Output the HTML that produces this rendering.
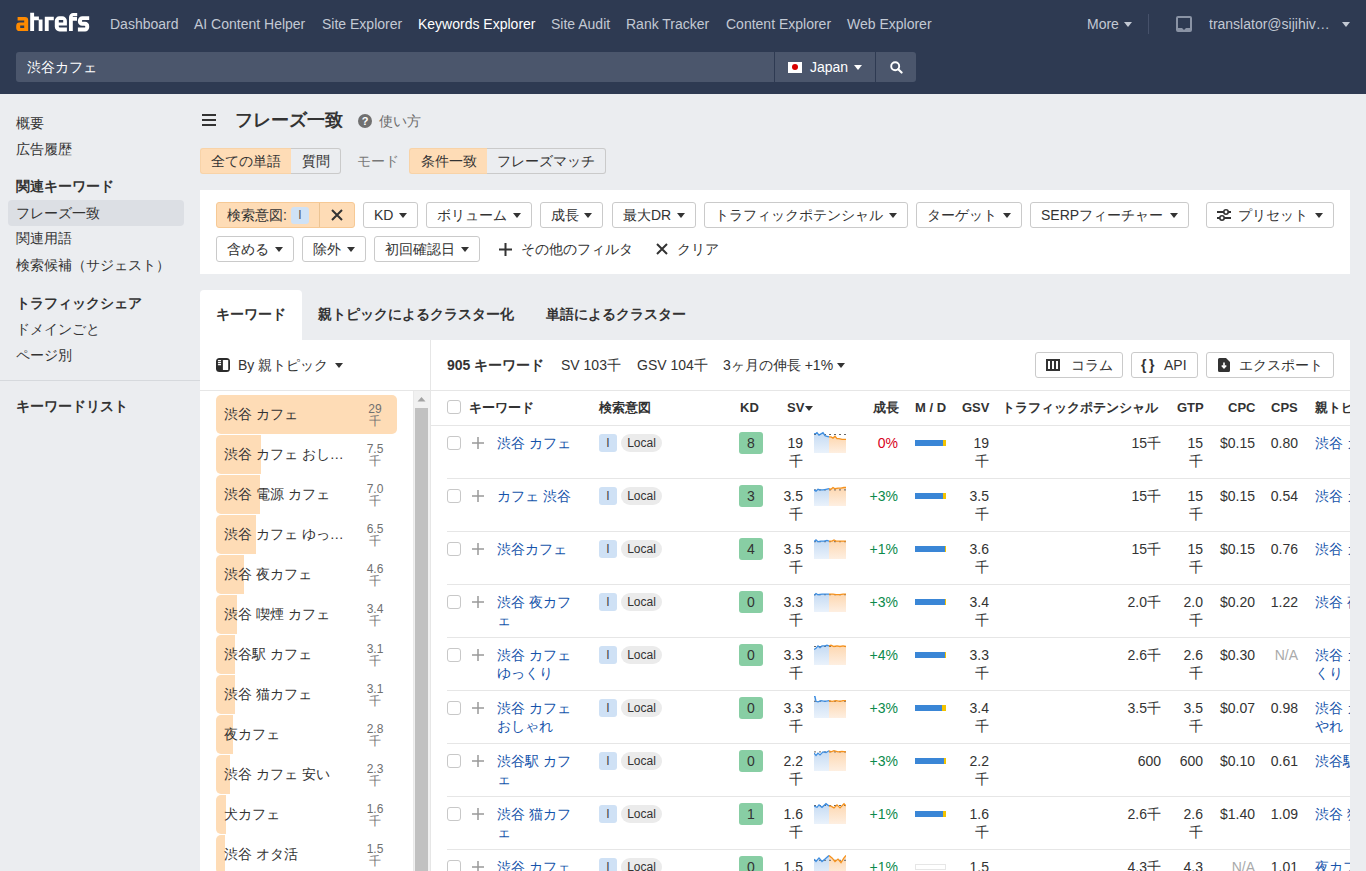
<!DOCTYPE html><html><head><meta charset="utf-8"><style>
*{box-sizing:border-box;margin:0;padding:0}
html,body{width:1366px;height:871px;overflow:hidden}
body{font-family:"Liberation Sans",sans-serif;font-size:14px;color:#333;background:#ebedf0;position:relative}
.abs{position:absolute;white-space:nowrap}
#hdr{position:absolute;left:0;top:0;width:1366px;height:94px;background:#2e3a52}
.nav{position:absolute;top:16px;line-height:16px;color:#c3c9d4;font-size:14px}
.sb{position:absolute;left:16px;line-height:26px;height:26px;font-size:14px;color:#333}
.btn{position:absolute;height:26px;background:#fff;border:1px solid #cacaca;border-radius:3px;line-height:24px;padding-left:10px;font-size:14px;color:#333;white-space:nowrap}
.btn span svg{display:block}
.th{position:absolute;top:390px;line-height:35px;font-weight:bold;font-size:13px;color:#333;white-space:nowrap}
.cell{position:absolute;line-height:18px;font-size:14px;white-space:nowrap}
.r{text-align:right}
</style></head><body>
<div id="hdr">
<svg class="abs" style="left:0;top:0" width="95" height="40" viewBox="0 0 95 40"><path fill="#ff8a00" fill-rule="evenodd" d="M17.6 17H25A3.2 3.2 0 0 1 28.2 20.2V31.1H19.6A3.4 3.4 0 0 1 16.2 27.7V26A3.4 3.4 0 0 1 19.6 22.6H24.2V20.4H17.6ZM20.2 25.6H24.2V28.1H20.2Z"/><path fill="#fff" d="M30.2 12.8H34.1V16.6H38.9V19.6H42.5V31.1H38.7V20.2H34.1V31.1H30.2Z"/><path fill="#fff" d="M44.8 16.7H53.8V20.2H48.7V31.1H44.8Z"/><path fill="#fff" fill-rule="evenodd" d="M59.5 16.3H62.2A4.7 4.7 0 0 1 66.9 21V25.5H58.8V26.6A1 1 0 0 0 59.8 27.6H66.9V31.4H59.5A4.7 4.7 0 0 1 54.8 26.7V21A4.7 4.7 0 0 1 59.5 16.3ZM58.8 20.1H63.2V22.4H58.8Z"/><path fill="#fff" d="M69 31V17.2A4.3 4.3 0 0 1 73.3 12.9H77.2V16.1H72.8V16.7H77V20.7H72.8V31Z"/><path fill="#fff" d="M82.4 16.3H89.2V20H82.8A0.9 0.9 0 0 0 82.8 21.8H85A4.2 4.2 0 0 1 89.2 26V27.2A4.2 4.2 0 0 1 85 31.4H77.9V27.6H84.4A0.9 0.9 0 0 0 84.4 25.8H82.2A4.3 4.3 0 0 1 77.9 21.5V20.8A4.5 4.5 0 0 1 82.4 16.3Z"/></svg>
<div class="nav" style="left:110px;color:#c3c9d4">Dashboard</div>
<div class="nav" style="left:194px;color:#c3c9d4">AI Content Helper</div>
<div class="nav" style="left:322px;color:#c3c9d4">Site Explorer</div>
<div class="nav" style="left:418px;color:#fff">Keywords Explorer</div>
<div class="nav" style="left:551px;color:#c3c9d4">Site Audit</div>
<div class="nav" style="left:626px;color:#c3c9d4">Rank Tracker</div>
<div class="nav" style="left:726px;color:#c3c9d4">Content Explorer</div>
<div class="nav" style="left:847px;color:#c3c9d4">Web Explorer</div>
<div class="nav" style="left:1087px">More</div>
<div class="abs" style="left:1124px;top:22px;color:#c3c9d4"><svg width="8" height="5" viewBox="0 0 8 5" style="display:block"><path d="M0 0H8L4 5Z" fill="currentColor"/></svg></div>
<div class="abs" style="left:1148px;top:14px;width:1px;height:20px;background:#46516a"></div>
<svg class="abs" style="left:1176px;top:16px" width="16" height="16" viewBox="0 0 16 16"><path d="M2 0H14A2 2 0 0 1 16 2V14A2 2 0 0 1 14 16H2A2 2 0 0 1 0 14V2A2 2 0 0 1 2 0ZM2 2V12H6L8 14L10 12H14V2Z" fill="#8a93a5"/></svg>
<div class="nav" style="left:1209px">translator@sijihiv…</div>
<div class="abs" style="left:1342px;top:22px;color:#c3c9d4"><svg width="8" height="5" viewBox="0 0 8 5" style="display:block"><path d="M0 0H8L4 5Z" fill="currentColor"/></svg></div>
<div class="abs" style="left:16px;top:52px;width:758px;height:30px;background:#4b566c;border-radius:3px 0 0 3px"></div>
<div class="abs" style="left:27px;top:58px;line-height:18px;color:#fff;font-size:14px">渋谷カフェ</div>
<div class="abs" style="left:775px;top:52px;width:100px;height:30px;background:#4b566c"></div>
<div class="abs" style="left:788px;top:62px;width:14px;height:11px;background:#fff"><div style="position:absolute;left:4px;top:2px;width:6px;height:6px;border-radius:50%;background:#d80000"></div></div>
<div class="abs" style="left:810px;top:59px;line-height:16px;color:#fff;font-size:14px">Japan</div>
<div class="abs" style="left:854px;top:65px;color:#fff"><svg width="8" height="5" viewBox="0 0 8 5" style="display:block"><path d="M0 0H8L4 5Z" fill="currentColor"/></svg></div>
<div class="abs" style="left:876px;top:52px;width:40px;height:30px;background:#4b566c;border-radius:0 3px 3px 0"></div>
<svg class="abs" style="left:890px;top:61px" width="13" height="13" viewBox="0 0 13 13"><circle cx="5.2" cy="5.2" r="4" stroke="#fff" stroke-width="1.9" fill="none"/><path d="M8.2 8.2L11.6 11.6" stroke="#fff" stroke-width="2.1" stroke-linecap="round"/></svg>
</div>
<div class="abs" style="left:8px;top:200px;width:176px;height:26px;background:#dcdfe4;border-radius:4px"></div>
<div class="sb" style="top:109.7px;">概要</div>
<div class="sb" style="top:136.0px;">広告履歴</div>
<div class="sb" style="top:173.0px;font-weight:bold;">関連キーワード</div>
<div class="sb" style="top:199.7px;">フレーズ一致</div>
<div class="sb" style="top:225.3px;">関連用語</div>
<div class="sb" style="top:251.7px;">検索候補（サジェスト）</div>
<div class="sb" style="top:289.7px;font-weight:bold;">トラフィックシェア</div>
<div class="sb" style="top:315.5px;">ドメインごと</div>
<div class="sb" style="top:342.0px;">ページ別</div>
<div class="abs" style="left:0;top:380px;width:200px;height:1px;background:#d6d9dd"></div>
<div class="sb" style="top:392.5px;font-weight:bold;font-size:14px">キーワードリスト</div>
<svg class="abs" style="left:202px;top:114px" width="14" height="12" viewBox="0 0 14 12"><rect x="0" y="0" width="14" height="2" fill="#333"/><rect x="0" y="5" width="14" height="2" fill="#333"/><rect x="0" y="10" width="14" height="2" fill="#333"/></svg>
<div class="abs" style="left:235px;top:109px;line-height:22px;font-size:18px;font-weight:bold;color:#333">フレーズ一致</div>
<svg class="abs" style="left:358px;top:114px" width="14" height="14" viewBox="0 0 14 14"><circle cx="7" cy="7" r="7" fill="#707070"/><text x="7" y="11.3" text-anchor="middle" font-family="Liberation Sans" font-weight="bold" font-size="11" fill="#fff">?</text></svg>
<div class="abs" style="left:379px;top:108px;line-height:26px;color:#6b6b6b">使い方</div>
<div class="abs" style="left:200px;top:148px;width:91px;height:26px;background:#fedcb6;border:1px solid #f8d3a8;border-right:none;border-radius:3px 0 0 3px;text-align:center;line-height:24px;font-size:14px;color:#333">全ての単語</div>
<div class="abs" style="left:291px;top:148px;width:50px;height:26px;background:#ebedf0;border:1px solid #cacaca;border-left:none;border-radius:0 3px 3px 0;text-align:center;line-height:24px;font-size:14px;color:#333">質問</div>
<div class="abs" style="left:357px;top:148px;line-height:26px;color:#777">モード</div>
<div class="abs" style="left:409px;top:148px;width:78px;height:26px;background:#fedcb6;border:1px solid #f8d3a8;border-right:none;border-radius:3px 0 0 3px;text-align:center;line-height:24px;font-size:14px;color:#333">条件一致</div>
<div class="abs" style="left:487px;top:148px;width:119px;height:26px;background:#ebedf0;border:1px solid #cacaca;border-left:none;border-radius:0 3px 3px 0;text-align:center;line-height:24px;font-size:14px;color:#333">フレーズマッチ</div>
<div class="abs" style="left:200px;top:190px;width:1150px;height:84px;background:#fff"></div>
<div class="abs" style="left:216px;top:202px;width:139px;height:26px;background:#fedcb6;border:1px solid #f6c995;border-radius:3px"></div>
<div class="abs" style="left:319px;top:203px;width:1px;height:24px;background:#ecc493"></div>
<div class="abs" style="left:227px;top:202px;line-height:26px;color:#333">検索意図:</div>
<div class="abs" style="left:291px;top:207px;width:18px;height:17px;background:#cfe2f6;border-radius:3px;text-align:center;line-height:17px;font-size:12px;color:#555">I</div>
<svg class="abs" style="left:331px;top:209px" width="12" height="12" viewBox="0 0 12 12"><path d="M1 1L11 11M11 1L1 11" stroke="#333" stroke-width="2"/></svg>
<div class="btn" style="left:363px;top:202px;width:55px">KD<span style="position:absolute;right:10px;top:10px"><svg width="8" height="5" viewBox="0 0 8 5" style="display:block"><path d="M0 0H8L4 5Z" fill="currentColor"/></svg></span></div>
<div class="btn" style="left:426px;top:202px;width:106px">ボリューム<span style="position:absolute;right:10px;top:10px"><svg width="8" height="5" viewBox="0 0 8 5" style="display:block"><path d="M0 0H8L4 5Z" fill="currentColor"/></svg></span></div>
<div class="btn" style="left:540px;top:202px;width:63px">成長<span style="position:absolute;right:10px;top:10px"><svg width="8" height="5" viewBox="0 0 8 5" style="display:block"><path d="M0 0H8L4 5Z" fill="currentColor"/></svg></span></div>
<div class="btn" style="left:612px;top:202px;width:84px">最大DR<span style="position:absolute;right:10px;top:10px"><svg width="8" height="5" viewBox="0 0 8 5" style="display:block"><path d="M0 0H8L4 5Z" fill="currentColor"/></svg></span></div>
<div class="btn" style="left:704px;top:202px;width:204px">トラフィックポテンシャル<span style="position:absolute;right:10px;top:10px"><svg width="8" height="5" viewBox="0 0 8 5" style="display:block"><path d="M0 0H8L4 5Z" fill="currentColor"/></svg></span></div>
<div class="btn" style="left:916px;top:202px;width:106px">ターゲット<span style="position:absolute;right:10px;top:10px"><svg width="8" height="5" viewBox="0 0 8 5" style="display:block"><path d="M0 0H8L4 5Z" fill="currentColor"/></svg></span></div>
<div class="btn" style="left:1030px;top:202px;width:159px">SERPフィーチャー<span style="position:absolute;right:10px;top:10px"><svg width="8" height="5" viewBox="0 0 8 5" style="display:block"><path d="M0 0H8L4 5Z" fill="currentColor"/></svg></span></div>
<div class="btn" style="left:1206px;top:202px;width:128px"><span style="display:inline-block;width:21px"></span>プリセット<span style="position:absolute;right:10px;top:10px"><svg width="8" height="5" viewBox="0 0 8 5" style="display:block"><path d="M0 0H8L4 5Z" fill="currentColor"/></svg></span></div>
<svg class="abs" style="left:1217px;top:209px" width="14" height="12" viewBox="0 0 14 12"><path d="M0 3H14M0 9H14" stroke="#333" stroke-width="2"/><circle cx="9" cy="3" r="2.2" fill="#fff" stroke="#333" stroke-width="1.6"/><circle cx="5" cy="9" r="2.2" fill="#fff" stroke="#333" stroke-width="1.6"/></svg>
<div class="btn" style="left:216px;top:236px;width:78px">含める<span style="position:absolute;right:10px;top:10px"><svg width="8" height="5" viewBox="0 0 8 5" style="display:block"><path d="M0 0H8L4 5Z" fill="currentColor"/></svg></span></div>
<div class="btn" style="left:302px;top:236px;width:64px">除外<span style="position:absolute;right:10px;top:10px"><svg width="8" height="5" viewBox="0 0 8 5" style="display:block"><path d="M0 0H8L4 5Z" fill="currentColor"/></svg></span></div>
<div class="btn" style="left:374px;top:236px;width:106px">初回確認日<span style="position:absolute;right:10px;top:10px"><svg width="8" height="5" viewBox="0 0 8 5" style="display:block"><path d="M0 0H8L4 5Z" fill="currentColor"/></svg></span></div>
<svg class="abs" style="left:499px;top:243px" width="13" height="13" viewBox="0 0 13 13"><path d="M6.5 0V13M0 6.5H13" stroke="#333" stroke-width="2"/></svg>
<div class="abs" style="left:521px;top:236px;line-height:26px;color:#333">その他のフィルタ</div>
<svg class="abs" style="left:656px;top:243px" width="12" height="12" viewBox="0 0 12 12"><path d="M1 1L11 11M11 1L1 11" stroke="#333" stroke-width="2"/></svg>
<div class="abs" style="left:677px;top:236px;line-height:26px;color:#333">クリア</div>
<div class="abs" style="left:200px;top:290px;width:102px;height:51px;background:#fff;border-radius:4px 4px 0 0"></div>
<div class="abs" style="left:216px;top:301px;line-height:26px;font-weight:bold;color:#333">キーワード</div>
<div class="abs" style="left:318px;top:301px;line-height:26px;font-weight:bold;color:#333">親トピックによるクラスター化</div>
<div class="abs" style="left:546px;top:301px;line-height:26px;font-weight:bold;color:#333">単語によるクラスター</div>
<div class="abs" style="left:200px;top:340px;width:1150px;height:531px;background:#fff"></div>
<div class="abs" style="left:430px;top:340px;width:1px;height:531px;background:#e6e6e6"></div>
<div class="abs" style="left:200px;top:390px;width:1150px;height:1px;background:#e6e6e6"></div>
<svg class="abs" style="left:216px;top:358px" width="14" height="14" viewBox="0 0 14 14"><rect x="0" y="0" width="14" height="14" rx="3.5" fill="#2b2b2b"/><rect x="6.9" y="1.9" width="5.3" height="10.1" rx="0.6" fill="#fff"/><rect x="1.9" y="2.1" width="3.2" height="1.1" rx="0.5" fill="#fff"/><rect x="1.9" y="4.1" width="3.2" height="1.1" rx="0.5" fill="#fff"/><rect x="1.9" y="6.1" width="3.2" height="1.1" rx="0.5" fill="#fff"/></svg>
<div class="abs" style="left:238px;top:352px;line-height:26px;color:#333">By 親トピック</div>
<div class="abs" style="left:335px;top:363px;color:#333;line-height:5px"><svg width="8" height="5" viewBox="0 0 8 5" style="display:block"><path d="M0 0H8L4 5Z" fill="currentColor"/></svg></div>
<div class="abs" style="left:216px;top:395px;width:181px;height:39px;background:#fedcb6;border-radius:5px"></div>
<div class="abs" style="left:224px;top:395px;line-height:39px;color:#333">渋谷 カフェ</div>
<div class="abs" style="left:366px;top:403px;line-height:12px;font-size:12px;color:#707070;text-align:center;width:18px">29<br>千</div>
<div class="abs" style="left:216px;top:435px;width:45px;height:39px;background:#fedcb6;border-radius:5px 0 0 5px"></div>
<div class="abs" style="left:224px;top:435px;line-height:39px;color:#333">渋谷 カフェ おし…</div>
<div class="abs" style="left:366px;top:443px;line-height:12px;font-size:12px;color:#707070;text-align:center;width:18px">7.5<br>千</div>
<div class="abs" style="left:216px;top:475px;width:44px;height:39px;background:#fedcb6;border-radius:5px 0 0 5px"></div>
<div class="abs" style="left:224px;top:475px;line-height:39px;color:#333">渋谷 電源 カフェ</div>
<div class="abs" style="left:366px;top:483px;line-height:12px;font-size:12px;color:#707070;text-align:center;width:18px">7.0<br>千</div>
<div class="abs" style="left:216px;top:515px;width:40px;height:39px;background:#fedcb6;border-radius:5px 0 0 5px"></div>
<div class="abs" style="left:224px;top:515px;line-height:39px;color:#333">渋谷 カフェ ゆっ…</div>
<div class="abs" style="left:366px;top:523px;line-height:12px;font-size:12px;color:#707070;text-align:center;width:18px">6.5<br>千</div>
<div class="abs" style="left:216px;top:555px;width:28px;height:39px;background:#fedcb6;border-radius:5px 0 0 5px"></div>
<div class="abs" style="left:224px;top:555px;line-height:39px;color:#333">渋谷 夜カフェ</div>
<div class="abs" style="left:366px;top:563px;line-height:12px;font-size:12px;color:#707070;text-align:center;width:18px">4.6<br>千</div>
<div class="abs" style="left:216px;top:595px;width:21px;height:39px;background:#fedcb6;border-radius:5px 0 0 5px"></div>
<div class="abs" style="left:224px;top:595px;line-height:39px;color:#333">渋谷 喫煙 カフェ</div>
<div class="abs" style="left:366px;top:603px;line-height:12px;font-size:12px;color:#707070;text-align:center;width:18px">3.4<br>千</div>
<div class="abs" style="left:216px;top:635px;width:19px;height:39px;background:#fedcb6;border-radius:5px 0 0 5px"></div>
<div class="abs" style="left:224px;top:635px;line-height:39px;color:#333">渋谷駅 カフェ</div>
<div class="abs" style="left:366px;top:643px;line-height:12px;font-size:12px;color:#707070;text-align:center;width:18px">3.1<br>千</div>
<div class="abs" style="left:216px;top:675px;width:19px;height:39px;background:#fedcb6;border-radius:5px 0 0 5px"></div>
<div class="abs" style="left:224px;top:675px;line-height:39px;color:#333">渋谷 猫カフェ</div>
<div class="abs" style="left:366px;top:683px;line-height:12px;font-size:12px;color:#707070;text-align:center;width:18px">3.1<br>千</div>
<div class="abs" style="left:216px;top:715px;width:17px;height:39px;background:#fedcb6;border-radius:5px 0 0 5px"></div>
<div class="abs" style="left:224px;top:715px;line-height:39px;color:#333">夜カフェ</div>
<div class="abs" style="left:366px;top:723px;line-height:12px;font-size:12px;color:#707070;text-align:center;width:18px">2.8<br>千</div>
<div class="abs" style="left:216px;top:755px;width:14px;height:39px;background:#fedcb6;border-radius:5px 0 0 5px"></div>
<div class="abs" style="left:224px;top:755px;line-height:39px;color:#333">渋谷 カフェ 安い</div>
<div class="abs" style="left:366px;top:763px;line-height:12px;font-size:12px;color:#707070;text-align:center;width:18px">2.3<br>千</div>
<div class="abs" style="left:216px;top:795px;width:10px;height:39px;background:#fedcb6;border-radius:5px 0 0 5px"></div>
<div class="abs" style="left:224px;top:795px;line-height:39px;color:#333">犬カフェ</div>
<div class="abs" style="left:366px;top:803px;line-height:12px;font-size:12px;color:#707070;text-align:center;width:18px">1.6<br>千</div>
<div class="abs" style="left:216px;top:835px;width:9px;height:39px;background:#fedcb6;border-radius:5px 0 0 5px"></div>
<div class="abs" style="left:224px;top:835px;line-height:39px;color:#333">渋谷 オタ活</div>
<div class="abs" style="left:366px;top:843px;line-height:12px;font-size:12px;color:#707070;text-align:center;width:18px">1.5<br>千</div>
<div class="abs" style="left:413px;top:391px;width:17px;height:480px;background:#f1f1f1;border-left:1px solid #e9e9e9"></div>
<svg class="abs" style="left:417px;top:396px" width="9" height="6" viewBox="0 0 9 6"><path d="M0.5 5.5H8.5L4.5 1Z" fill="#a3a3a3"/></svg>
<div class="abs" style="left:415px;top:408px;width:13px;height:463px;background:#c1c1c1"></div>
<div class="abs" style="left:447px;top:352px;line-height:26px;color:#333"><b>905</b> <b>キーワード</b></div>
<div class="abs" style="left:561px;top:352px;line-height:26px;color:#333">SV 103千</div>
<div class="abs" style="left:637px;top:352px;line-height:26px;color:#333">GSV 104千</div>
<div class="abs" style="left:723px;top:352px;line-height:26px;color:#333">3ヶ月の伸長 +1%</div>
<div class="abs" style="left:837px;top:363px;color:#333;line-height:5px"><svg width="8" height="5" viewBox="0 0 8 5" style="display:block"><path d="M0 0H8L4 5Z" fill="currentColor"/></svg></div>
<div class="btn" style="left:1035px;top:352px;width:88px;padding-left:35px">コラム</div>
<svg class="abs" style="left:1046px;top:359px" width="14" height="12" viewBox="0 0 14 12"><path d="M1 1H13V11H1Z" fill="none" stroke="#333" stroke-width="2"/><path d="M5 1V11M9 1V11" stroke="#333" stroke-width="2"/></svg>
<div class="btn" style="left:1131px;top:352px;width:67px;padding-left:32px">API</div>
<div class="abs" style="left:1141px;top:352px;line-height:26px;font-weight:bold;font-size:14px;letter-spacing:2.5px;color:#333">{}</div>
<div class="btn" style="left:1206px;top:352px;width:128px;padding-left:32px">エクスポート</div>
<svg class="abs" style="left:1218px;top:358px" width="12" height="14" viewBox="0 0 12 14"><path d="M0 1.5A1.5 1.5 0 0 1 1.5 0H8L12 4V12.5A1.5 1.5 0 0 1 10.5 14H1.5A1.5 1.5 0 0 1 0 12.5Z" fill="#333"/><path d="M6 4.5V9.5M3.8 7.5L6 9.8L8.2 7.5" stroke="#fff" stroke-width="1.6" fill="none"/></svg>
<div class="abs" style="left:447px;top:400px;width:14px;height:14px;border:1px solid #c8c8c8;border-radius:3px;background:#fff"></div>
<div class="th" style="left:469px">キーワード</div>
<div class="th" style="left:599px">検索意図</div>
<div class="th" style="left:740px">KD</div>
<div class="th" style="left:787px">SV</div>
<div class="th" style="left:873px">成長</div>
<div class="th" style="left:915px">M / D</div>
<div class="th" style="left:962px">GSV</div>
<div class="th" style="left:1002px">トラフィックポテンシャル</div>
<div class="th" style="left:1177px">GTP</div>
<div class="th" style="left:1228px">CPC</div>
<div class="th" style="left:1271px">CPS</div>
<div class="th" style="left:1315px">親トピック</div>
<div class="abs" style="left:805px;top:406px;color:#333;line-height:5px"><svg width="8" height="5" viewBox="0 0 8 5" style="display:block"><path d="M0 0H8L4 5Z" fill="currentColor"/></svg></div>
<div class="abs" style="left:431px;top:425px;width:919px;height:1px;background:#e6e6e6"></div>
<div class="abs" style="left:447px;top:436px;width:14px;height:14px;border:1px solid #c8c8c8;border-radius:3px;background:#fff"></div>
<svg class="abs" style="left:472px;top:437px" width="12" height="12" viewBox="0 0 12 12"><path d="M6 0V12M0 6H12" stroke="#999" stroke-width="1.5"/></svg>
<div class="cell" style="left:497px;top:434px;color:#1553aa">渋谷 カフェ</div>
<div class="abs" style="left:599px;top:434px;width:18px;height:18px;background:#cfe1f5;border-radius:3px;text-align:center;line-height:18px;font-size:12px;color:#444">I</div>
<div class="abs" style="left:621px;top:434px;width:41px;height:18px;background:#ebebeb;border-radius:9px;text-align:center;line-height:18px;font-size:12px;color:#333">Local</div>
<div class="abs" style="left:739px;top:432px;width:24px;height:22px;background:#88cea4;border-radius:3px;text-align:center;line-height:22px;font-size:14px;color:#333">8</div>
<div class="cell r" style="left:763px;width:40px;top:434px;color:#333">19<br>千</div>
<svg class="abs" style="left:814px;top:431px" width="32" height="22" viewBox="0 0 32 22"><defs><linearGradient id="gb0" x1="0" y1="0" x2="0" y2="1"><stop offset="0" stop-color="#c4daf3"/><stop offset="1" stop-color="#eaf2fb"/></linearGradient><linearGradient id="go0" x1="0" y1="0" x2="0" y2="1"><stop offset="0" stop-color="#fdd7b0"/><stop offset="1" stop-color="#feefe1"/></linearGradient></defs><path d="M0.0 2.9 L2.0 2.3 L3.0 1.7 L5.0 4.1 L7.0 2.9 L9.0 1.7 L11.0 4.7 L13.0 5.3 L15.0 5.9 L15 22 L0 22Z" fill="url(#gb0)"/><path d="M15.0 5.9 L17.0 5.9 L19.0 7.1 L21.0 5.3 L23.0 7.7 L25.0 7.7 L28.0 8.3 L32.0 8.3 L32 22 L15 22Z" fill="url(#go0)"/><path d="M0 3.5 H32" stroke="#666" stroke-width="1" stroke-dasharray="2 3" fill="none"/><path d="M0.0 2.9 L2.0 2.3 L3.0 1.7 L5.0 4.1 L7.0 2.9 L9.0 1.7 L11.0 4.7 L13.0 5.3 L15.0 5.9" stroke="#3f8ee0" stroke-width="1.3" fill="none"/><path d="M15.0 5.9 L17.0 5.9 L19.0 7.1 L21.0 5.3 L23.0 7.7 L25.0 7.7 L28.0 8.3 L32.0 8.3" stroke="#f5921e" stroke-width="1.3" fill="none"/></svg>
<div class="cell r" style="left:858px;width:40px;top:434px;color:#d8001b">0%</div>
<div class="abs" style="left:915px;top:440px;width:28px;height:6px;background:#3a86d6"></div>
<div class="abs" style="left:943px;top:440px;width:3px;height:6px;background:#f3c300"></div>
<div class="cell r" style="left:949px;width:40px;top:434px;color:#333">19<br>千</div>
<div class="cell r" style="left:1101px;width:60px;top:434px;color:#333">15千</div>
<div class="cell r" style="left:1163px;width:40px;top:434px;color:#333">15<br>千</div>
<div class="cell r" style="left:1205px;width:50px;top:434px;color:#333">$0.15</div>
<div class="cell r" style="left:1258px;width:40px;top:434px;color:#333">0.80</div>
<div class="cell" style="left:1315px;top:434px;color:#1553aa">渋谷 カフェ</div>
<div class="abs" style="left:447px;top:478px;width:903px;height:1px;background:#e6e6e6"></div>
<div class="abs" style="left:447px;top:489px;width:14px;height:14px;border:1px solid #c8c8c8;border-radius:3px;background:#fff"></div>
<svg class="abs" style="left:472px;top:490px" width="12" height="12" viewBox="0 0 12 12"><path d="M6 0V12M0 6H12" stroke="#999" stroke-width="1.5"/></svg>
<div class="cell" style="left:497px;top:487px;color:#1553aa">カフェ 渋谷</div>
<div class="abs" style="left:599px;top:487px;width:18px;height:18px;background:#cfe1f5;border-radius:3px;text-align:center;line-height:18px;font-size:12px;color:#444">I</div>
<div class="abs" style="left:621px;top:487px;width:41px;height:18px;background:#ebebeb;border-radius:9px;text-align:center;line-height:18px;font-size:12px;color:#333">Local</div>
<div class="abs" style="left:739px;top:485px;width:24px;height:22px;background:#88cea4;border-radius:3px;text-align:center;line-height:22px;font-size:14px;color:#333">3</div>
<div class="cell r" style="left:763px;width:40px;top:487px;color:#333">3.5<br>千</div>
<svg class="abs" style="left:814px;top:484px" width="32" height="22" viewBox="0 0 32 22"><defs><linearGradient id="gb1" x1="0" y1="0" x2="0" y2="1"><stop offset="0" stop-color="#c4daf3"/><stop offset="1" stop-color="#eaf2fb"/></linearGradient><linearGradient id="go1" x1="0" y1="0" x2="0" y2="1"><stop offset="0" stop-color="#fdd7b0"/><stop offset="1" stop-color="#feefe1"/></linearGradient></defs><path d="M0.0 5.9 L2.0 7.1 L4.0 5.3 L6.0 5.9 L9.0 5.9 L12.0 5.3 L15.0 4.7 L15 22 L0 22Z" fill="url(#gb1)"/><path d="M15.0 4.7 L17.0 5.3 L19.0 3.5 L21.0 4.7 L24.0 4.1 L27.0 4.1 L30.0 3.5 L32.0 3.5 L32 22 L15 22Z" fill="url(#go1)"/><path d="M0 5.9 H32" stroke="#666" stroke-width="1" stroke-dasharray="2 3" fill="none"/><path d="M0.0 5.9 L2.0 7.1 L4.0 5.3 L6.0 5.9 L9.0 5.9 L12.0 5.3 L15.0 4.7" stroke="#3f8ee0" stroke-width="1.3" fill="none"/><path d="M15.0 4.7 L17.0 5.3 L19.0 3.5 L21.0 4.7 L24.0 4.1 L27.0 4.1 L30.0 3.5 L32.0 3.5" stroke="#f5921e" stroke-width="1.3" fill="none"/></svg>
<div class="cell r" style="left:858px;width:40px;top:487px;color:#0b8a4b">+3%</div>
<div class="abs" style="left:915px;top:493px;width:28px;height:6px;background:#3a86d6"></div>
<div class="abs" style="left:943px;top:493px;width:3px;height:6px;background:#f3c300"></div>
<div class="cell r" style="left:949px;width:40px;top:487px;color:#333">3.5<br>千</div>
<div class="cell r" style="left:1101px;width:60px;top:487px;color:#333">15千</div>
<div class="cell r" style="left:1163px;width:40px;top:487px;color:#333">15<br>千</div>
<div class="cell r" style="left:1205px;width:50px;top:487px;color:#333">$0.15</div>
<div class="cell r" style="left:1258px;width:40px;top:487px;color:#333">0.54</div>
<div class="cell" style="left:1315px;top:487px;color:#1553aa">渋谷 カフェ</div>
<div class="abs" style="left:447px;top:531px;width:903px;height:1px;background:#e6e6e6"></div>
<div class="abs" style="left:447px;top:542px;width:14px;height:14px;border:1px solid #c8c8c8;border-radius:3px;background:#fff"></div>
<svg class="abs" style="left:472px;top:543px" width="12" height="12" viewBox="0 0 12 12"><path d="M6 0V12M0 6H12" stroke="#999" stroke-width="1.5"/></svg>
<div class="cell" style="left:497px;top:540px;color:#1553aa">渋谷カフェ</div>
<div class="abs" style="left:599px;top:540px;width:18px;height:18px;background:#cfe1f5;border-radius:3px;text-align:center;line-height:18px;font-size:12px;color:#444">I</div>
<div class="abs" style="left:621px;top:540px;width:41px;height:18px;background:#ebebeb;border-radius:9px;text-align:center;line-height:18px;font-size:12px;color:#333">Local</div>
<div class="abs" style="left:739px;top:538px;width:24px;height:22px;background:#88cea4;border-radius:3px;text-align:center;line-height:22px;font-size:14px;color:#333">4</div>
<div class="cell r" style="left:763px;width:40px;top:540px;color:#333">3.5<br>千</div>
<svg class="abs" style="left:814px;top:537px" width="32" height="22" viewBox="0 0 32 22"><defs><linearGradient id="gb2" x1="0" y1="0" x2="0" y2="1"><stop offset="0" stop-color="#c4daf3"/><stop offset="1" stop-color="#eaf2fb"/></linearGradient><linearGradient id="go2" x1="0" y1="0" x2="0" y2="1"><stop offset="0" stop-color="#fdd7b0"/><stop offset="1" stop-color="#feefe1"/></linearGradient></defs><path d="M0.0 4.7 L2.0 2.9 L4.0 4.7 L7.0 4.1 L10.0 4.1 L13.0 3.5 L15.0 4.1 L15 22 L0 22Z" fill="url(#gb2)"/><path d="M15.0 4.1 L18.0 4.1 L20.0 2.9 L22.0 4.1 L25.0 4.1 L28.0 4.1 L32.0 4.1 L32 22 L15 22Z" fill="url(#go2)"/><path d="M0 4.7 H32" stroke="#666" stroke-width="1" stroke-dasharray="2 3" fill="none"/><path d="M0.0 4.7 L2.0 2.9 L4.0 4.7 L7.0 4.1 L10.0 4.1 L13.0 3.5 L15.0 4.1" stroke="#3f8ee0" stroke-width="1.3" fill="none"/><path d="M15.0 4.1 L18.0 4.1 L20.0 2.9 L22.0 4.1 L25.0 4.1 L28.0 4.1 L32.0 4.1" stroke="#f5921e" stroke-width="1.3" fill="none"/></svg>
<div class="cell r" style="left:858px;width:40px;top:540px;color:#0b8a4b">+1%</div>
<div class="abs" style="left:915px;top:546px;width:30px;height:6px;background:#3a86d6"></div>
<div class="abs" style="left:945px;top:546px;width:1px;height:6px;background:#f3c300"></div>
<div class="cell r" style="left:949px;width:40px;top:540px;color:#333">3.6<br>千</div>
<div class="cell r" style="left:1101px;width:60px;top:540px;color:#333">15千</div>
<div class="cell r" style="left:1163px;width:40px;top:540px;color:#333">15<br>千</div>
<div class="cell r" style="left:1205px;width:50px;top:540px;color:#333">$0.15</div>
<div class="cell r" style="left:1258px;width:40px;top:540px;color:#333">0.76</div>
<div class="cell" style="left:1315px;top:540px;color:#1553aa">渋谷 カフェ</div>
<div class="abs" style="left:447px;top:584px;width:903px;height:1px;background:#e6e6e6"></div>
<div class="abs" style="left:447px;top:595px;width:14px;height:14px;border:1px solid #c8c8c8;border-radius:3px;background:#fff"></div>
<svg class="abs" style="left:472px;top:596px" width="12" height="12" viewBox="0 0 12 12"><path d="M6 0V12M0 6H12" stroke="#999" stroke-width="1.5"/></svg>
<div class="cell" style="left:497px;top:593px;color:#1553aa">渋谷 夜カフ<br>ェ</div>
<div class="abs" style="left:599px;top:593px;width:18px;height:18px;background:#cfe1f5;border-radius:3px;text-align:center;line-height:18px;font-size:12px;color:#444">I</div>
<div class="abs" style="left:621px;top:593px;width:41px;height:18px;background:#ebebeb;border-radius:9px;text-align:center;line-height:18px;font-size:12px;color:#333">Local</div>
<div class="abs" style="left:739px;top:591px;width:24px;height:22px;background:#88cea4;border-radius:3px;text-align:center;line-height:22px;font-size:14px;color:#333">0</div>
<div class="cell r" style="left:763px;width:40px;top:593px;color:#333">3.3<br>千</div>
<svg class="abs" style="left:814px;top:590px" width="32" height="22" viewBox="0 0 32 22"><defs><linearGradient id="gb3" x1="0" y1="0" x2="0" y2="1"><stop offset="0" stop-color="#c4daf3"/><stop offset="1" stop-color="#eaf2fb"/></linearGradient><linearGradient id="go3" x1="0" y1="0" x2="0" y2="1"><stop offset="0" stop-color="#fdd7b0"/><stop offset="1" stop-color="#feefe1"/></linearGradient></defs><path d="M0.0 5.3 L2.0 3.5 L4.0 4.7 L8.0 4.1 L12.0 4.1 L15.0 4.1 L15 22 L0 22Z" fill="url(#gb3)"/><path d="M15.0 4.1 L19.0 4.1 L22.0 4.7 L26.0 4.7 L29.0 4.1 L32.0 4.1 L32 22 L15 22Z" fill="url(#go3)"/><path d="M0 4.7 H32" stroke="#666" stroke-width="1" stroke-dasharray="2 3" fill="none"/><path d="M0.0 5.3 L2.0 3.5 L4.0 4.7 L8.0 4.1 L12.0 4.1 L15.0 4.1" stroke="#3f8ee0" stroke-width="1.3" fill="none"/><path d="M15.0 4.1 L19.0 4.1 L22.0 4.7 L26.0 4.7 L29.0 4.1 L32.0 4.1" stroke="#f5921e" stroke-width="1.3" fill="none"/></svg>
<div class="cell r" style="left:858px;width:40px;top:593px;color:#0b8a4b">+3%</div>
<div class="abs" style="left:915px;top:599px;width:30px;height:6px;background:#3a86d6"></div>
<div class="abs" style="left:945px;top:599px;width:1px;height:6px;background:#f3c300"></div>
<div class="cell r" style="left:949px;width:40px;top:593px;color:#333">3.4<br>千</div>
<div class="cell r" style="left:1101px;width:60px;top:593px;color:#333">2.0千</div>
<div class="cell r" style="left:1163px;width:40px;top:593px;color:#333">2.0<br>千</div>
<div class="cell r" style="left:1205px;width:50px;top:593px;color:#333">$0.20</div>
<div class="cell r" style="left:1258px;width:40px;top:593px;color:#333">1.22</div>
<div class="cell" style="left:1315px;top:593px;color:#1553aa">渋谷 夜カフェ</div>
<div class="abs" style="left:447px;top:637px;width:903px;height:1px;background:#e6e6e6"></div>
<div class="abs" style="left:447px;top:648px;width:14px;height:14px;border:1px solid #c8c8c8;border-radius:3px;background:#fff"></div>
<svg class="abs" style="left:472px;top:649px" width="12" height="12" viewBox="0 0 12 12"><path d="M6 0V12M0 6H12" stroke="#999" stroke-width="1.5"/></svg>
<div class="cell" style="left:497px;top:646px;color:#1553aa">渋谷 カフェ<br>ゆっくり</div>
<div class="abs" style="left:599px;top:646px;width:18px;height:18px;background:#cfe1f5;border-radius:3px;text-align:center;line-height:18px;font-size:12px;color:#444">I</div>
<div class="abs" style="left:621px;top:646px;width:41px;height:18px;background:#ebebeb;border-radius:9px;text-align:center;line-height:18px;font-size:12px;color:#333">Local</div>
<div class="abs" style="left:739px;top:644px;width:24px;height:22px;background:#88cea4;border-radius:3px;text-align:center;line-height:22px;font-size:14px;color:#333">0</div>
<div class="cell r" style="left:763px;width:40px;top:646px;color:#333">3.3<br>千</div>
<svg class="abs" style="left:814px;top:643px" width="32" height="22" viewBox="0 0 32 22"><defs><linearGradient id="gb4" x1="0" y1="0" x2="0" y2="1"><stop offset="0" stop-color="#c4daf3"/><stop offset="1" stop-color="#eaf2fb"/></linearGradient><linearGradient id="go4" x1="0" y1="0" x2="0" y2="1"><stop offset="0" stop-color="#fdd7b0"/><stop offset="1" stop-color="#feefe1"/></linearGradient></defs><path d="M0.0 6.5 L2.0 5.3 L4.0 2.9 L6.0 4.7 L8.0 2.9 L11.0 2.9 L13.0 2.3 L15.0 2.9 L15 22 L0 22Z" fill="url(#gb4)"/><path d="M15.0 2.9 L17.0 2.3 L20.0 3.5 L23.0 2.9 L26.0 3.5 L29.0 2.9 L32.0 3.5 L32 22 L15 22Z" fill="url(#go4)"/><path d="M0 3.5 H32" stroke="#666" stroke-width="1" stroke-dasharray="2 3" fill="none"/><path d="M0.0 6.5 L2.0 5.3 L4.0 2.9 L6.0 4.7 L8.0 2.9 L11.0 2.9 L13.0 2.3 L15.0 2.9" stroke="#3f8ee0" stroke-width="1.3" fill="none"/><path d="M15.0 2.9 L17.0 2.3 L20.0 3.5 L23.0 2.9 L26.0 3.5 L29.0 2.9 L32.0 3.5" stroke="#f5921e" stroke-width="1.3" fill="none"/></svg>
<div class="cell r" style="left:858px;width:40px;top:646px;color:#0b8a4b">+4%</div>
<div class="abs" style="left:915px;top:652px;width:30px;height:6px;background:#3a86d6"></div>
<div class="abs" style="left:945px;top:652px;width:1px;height:6px;background:#f3c300"></div>
<div class="cell r" style="left:949px;width:40px;top:646px;color:#333">3.3<br>千</div>
<div class="cell r" style="left:1101px;width:60px;top:646px;color:#333">2.6千</div>
<div class="cell r" style="left:1163px;width:40px;top:646px;color:#333">2.6<br>千</div>
<div class="cell r" style="left:1205px;width:50px;top:646px;color:#333">$0.30</div>
<div class="cell r" style="left:1258px;width:40px;top:646px;color:#aaa">N/A</div>
<div class="cell" style="left:1315px;top:646px;color:#1553aa">渋谷 カフェ ゆっ<br>くり</div>
<div class="abs" style="left:447px;top:690px;width:903px;height:1px;background:#e6e6e6"></div>
<div class="abs" style="left:447px;top:701px;width:14px;height:14px;border:1px solid #c8c8c8;border-radius:3px;background:#fff"></div>
<svg class="abs" style="left:472px;top:702px" width="12" height="12" viewBox="0 0 12 12"><path d="M6 0V12M0 6H12" stroke="#999" stroke-width="1.5"/></svg>
<div class="cell" style="left:497px;top:699px;color:#1553aa">渋谷 カフェ<br>おしゃれ</div>
<div class="abs" style="left:599px;top:699px;width:18px;height:18px;background:#cfe1f5;border-radius:3px;text-align:center;line-height:18px;font-size:12px;color:#444">I</div>
<div class="abs" style="left:621px;top:699px;width:41px;height:18px;background:#ebebeb;border-radius:9px;text-align:center;line-height:18px;font-size:12px;color:#333">Local</div>
<div class="abs" style="left:739px;top:697px;width:24px;height:22px;background:#88cea4;border-radius:3px;text-align:center;line-height:22px;font-size:14px;color:#333">0</div>
<div class="cell r" style="left:763px;width:40px;top:699px;color:#333">3.3<br>千</div>
<svg class="abs" style="left:814px;top:696px" width="32" height="22" viewBox="0 0 32 22"><defs><linearGradient id="gb5" x1="0" y1="0" x2="0" y2="1"><stop offset="0" stop-color="#c4daf3"/><stop offset="1" stop-color="#eaf2fb"/></linearGradient><linearGradient id="go5" x1="0" y1="0" x2="0" y2="1"><stop offset="0" stop-color="#fdd7b0"/><stop offset="1" stop-color="#feefe1"/></linearGradient></defs><path d="M0.0 0.5 L1.0 0.5 L2.0 5.3 L4.0 5.9 L7.0 4.7 L11.0 5.3 L15.0 4.7 L15 22 L0 22Z" fill="url(#gb5)"/><path d="M15.0 4.7 L18.0 5.3 L22.0 4.7 L26.0 5.3 L29.0 4.7 L32.0 4.7 L32 22 L15 22Z" fill="url(#go5)"/><path d="M0 5.3 H32" stroke="#666" stroke-width="1" stroke-dasharray="2 3" fill="none"/><path d="M0.0 0.5 L1.0 0.5 L2.0 5.3 L4.0 5.9 L7.0 4.7 L11.0 5.3 L15.0 4.7" stroke="#3f8ee0" stroke-width="1.3" fill="none"/><path d="M15.0 4.7 L18.0 5.3 L22.0 4.7 L26.0 5.3 L29.0 4.7 L32.0 4.7" stroke="#f5921e" stroke-width="1.3" fill="none"/></svg>
<div class="cell r" style="left:858px;width:40px;top:699px;color:#0b8a4b">+3%</div>
<div class="abs" style="left:915px;top:705px;width:27px;height:6px;background:#3a86d6"></div>
<div class="abs" style="left:942px;top:705px;width:4px;height:6px;background:#f3c300"></div>
<div class="cell r" style="left:949px;width:40px;top:699px;color:#333">3.4<br>千</div>
<div class="cell r" style="left:1101px;width:60px;top:699px;color:#333">3.5千</div>
<div class="cell r" style="left:1163px;width:40px;top:699px;color:#333">3.5<br>千</div>
<div class="cell r" style="left:1205px;width:50px;top:699px;color:#333">$0.07</div>
<div class="cell r" style="left:1258px;width:40px;top:699px;color:#333">0.98</div>
<div class="cell" style="left:1315px;top:699px;color:#1553aa">渋谷 カフェ おし<br>やれ</div>
<div class="abs" style="left:447px;top:743px;width:903px;height:1px;background:#e6e6e6"></div>
<div class="abs" style="left:447px;top:754px;width:14px;height:14px;border:1px solid #c8c8c8;border-radius:3px;background:#fff"></div>
<svg class="abs" style="left:472px;top:755px" width="12" height="12" viewBox="0 0 12 12"><path d="M6 0V12M0 6H12" stroke="#999" stroke-width="1.5"/></svg>
<div class="cell" style="left:497px;top:752px;color:#1553aa">渋谷駅 カフ<br>ェ</div>
<div class="abs" style="left:599px;top:752px;width:18px;height:18px;background:#cfe1f5;border-radius:3px;text-align:center;line-height:18px;font-size:12px;color:#444">I</div>
<div class="abs" style="left:621px;top:752px;width:41px;height:18px;background:#ebebeb;border-radius:9px;text-align:center;line-height:18px;font-size:12px;color:#333">Local</div>
<div class="abs" style="left:739px;top:750px;width:24px;height:22px;background:#88cea4;border-radius:3px;text-align:center;line-height:22px;font-size:14px;color:#333">0</div>
<div class="cell r" style="left:763px;width:40px;top:752px;color:#333">2.2<br>千</div>
<svg class="abs" style="left:814px;top:749px" width="32" height="22" viewBox="0 0 32 22"><defs><linearGradient id="gb6" x1="0" y1="0" x2="0" y2="1"><stop offset="0" stop-color="#c4daf3"/><stop offset="1" stop-color="#eaf2fb"/></linearGradient><linearGradient id="go6" x1="0" y1="0" x2="0" y2="1"><stop offset="0" stop-color="#fdd7b0"/><stop offset="1" stop-color="#feefe1"/></linearGradient></defs><path d="M0.0 4.1 L2.0 6.5 L4.0 4.1 L6.0 5.9 L9.0 2.9 L12.0 3.5 L15.0 1.7 L15 22 L0 22Z" fill="url(#gb6)"/><path d="M15.0 1.7 L17.0 2.9 L20.0 1.7 L24.0 2.9 L28.0 2.3 L32.0 2.9 L32 22 L15 22Z" fill="url(#go6)"/><path d="M0 2.9 H32" stroke="#666" stroke-width="1" stroke-dasharray="2 3" fill="none"/><path d="M0.0 4.1 L2.0 6.5 L4.0 4.1 L6.0 5.9 L9.0 2.9 L12.0 3.5 L15.0 1.7" stroke="#3f8ee0" stroke-width="1.3" fill="none"/><path d="M15.0 1.7 L17.0 2.9 L20.0 1.7 L24.0 2.9 L28.0 2.3 L32.0 2.9" stroke="#f5921e" stroke-width="1.3" fill="none"/></svg>
<div class="cell r" style="left:858px;width:40px;top:752px;color:#0b8a4b">+3%</div>
<div class="abs" style="left:915px;top:758px;width:29px;height:6px;background:#3a86d6"></div>
<div class="abs" style="left:944px;top:758px;width:2px;height:6px;background:#f3c300"></div>
<div class="cell r" style="left:949px;width:40px;top:752px;color:#333">2.2<br>千</div>
<div class="cell r" style="left:1101px;width:60px;top:752px;color:#333">600</div>
<div class="cell r" style="left:1163px;width:40px;top:752px;color:#333">600</div>
<div class="cell r" style="left:1205px;width:50px;top:752px;color:#333">$0.10</div>
<div class="cell r" style="left:1258px;width:40px;top:752px;color:#333">0.61</div>
<div class="cell" style="left:1315px;top:752px;color:#1553aa">渋谷駅 カフェ</div>
<div class="abs" style="left:447px;top:796px;width:903px;height:1px;background:#e6e6e6"></div>
<div class="abs" style="left:447px;top:807px;width:14px;height:14px;border:1px solid #c8c8c8;border-radius:3px;background:#fff"></div>
<svg class="abs" style="left:472px;top:808px" width="12" height="12" viewBox="0 0 12 12"><path d="M6 0V12M0 6H12" stroke="#999" stroke-width="1.5"/></svg>
<div class="cell" style="left:497px;top:805px;color:#1553aa">渋谷 猫カフ<br>ェ</div>
<div class="abs" style="left:599px;top:805px;width:18px;height:18px;background:#cfe1f5;border-radius:3px;text-align:center;line-height:18px;font-size:12px;color:#444">I</div>
<div class="abs" style="left:621px;top:805px;width:41px;height:18px;background:#ebebeb;border-radius:9px;text-align:center;line-height:18px;font-size:12px;color:#333">Local</div>
<div class="abs" style="left:739px;top:803px;width:24px;height:22px;background:#88cea4;border-radius:3px;text-align:center;line-height:22px;font-size:14px;color:#333">1</div>
<div class="cell r" style="left:763px;width:40px;top:805px;color:#333">1.6<br>千</div>
<svg class="abs" style="left:814px;top:802px" width="32" height="22" viewBox="0 0 32 22"><defs><linearGradient id="gb7" x1="0" y1="0" x2="0" y2="1"><stop offset="0" stop-color="#c4daf3"/><stop offset="1" stop-color="#eaf2fb"/></linearGradient><linearGradient id="go7" x1="0" y1="0" x2="0" y2="1"><stop offset="0" stop-color="#fdd7b0"/><stop offset="1" stop-color="#feefe1"/></linearGradient></defs><path d="M0.0 4.1 L3.0 5.3 L5.0 2.9 L8.0 5.3 L12.0 1.7 L15.0 4.1 L15 22 L0 22Z" fill="url(#gb7)"/><path d="M15.0 4.1 L17.0 4.1 L20.0 5.9 L23.0 2.9 L26.0 5.9 L30.0 1.7 L32.0 4.1 L32 22 L15 22Z" fill="url(#go7)"/><path d="M0 3.5 H32" stroke="#666" stroke-width="1" stroke-dasharray="2 3" fill="none"/><path d="M0.0 4.1 L3.0 5.3 L5.0 2.9 L8.0 5.3 L12.0 1.7 L15.0 4.1" stroke="#3f8ee0" stroke-width="1.3" fill="none"/><path d="M15.0 4.1 L17.0 4.1 L20.0 5.9 L23.0 2.9 L26.0 5.9 L30.0 1.7 L32.0 4.1" stroke="#f5921e" stroke-width="1.3" fill="none"/></svg>
<div class="cell r" style="left:858px;width:40px;top:805px;color:#0b8a4b">+1%</div>
<div class="abs" style="left:915px;top:811px;width:28px;height:6px;background:#3a86d6"></div>
<div class="abs" style="left:943px;top:811px;width:3px;height:6px;background:#f3c300"></div>
<div class="cell r" style="left:949px;width:40px;top:805px;color:#333">1.6<br>千</div>
<div class="cell r" style="left:1101px;width:60px;top:805px;color:#333">2.6千</div>
<div class="cell r" style="left:1163px;width:40px;top:805px;color:#333">2.6<br>千</div>
<div class="cell r" style="left:1205px;width:50px;top:805px;color:#333">$1.40</div>
<div class="cell r" style="left:1258px;width:40px;top:805px;color:#333">1.09</div>
<div class="cell" style="left:1315px;top:805px;color:#1553aa">渋谷 猫カフェ</div>
<div class="abs" style="left:447px;top:849px;width:903px;height:1px;background:#e6e6e6"></div>
<div class="abs" style="left:447px;top:860px;width:14px;height:14px;border:1px solid #c8c8c8;border-radius:3px;background:#fff"></div>
<svg class="abs" style="left:472px;top:861px" width="12" height="12" viewBox="0 0 12 12"><path d="M6 0V12M0 6H12" stroke="#999" stroke-width="1.5"/></svg>
<div class="cell" style="left:497px;top:858px;color:#1553aa">渋谷 カフェ<br>安い</div>
<div class="abs" style="left:599px;top:858px;width:18px;height:18px;background:#cfe1f5;border-radius:3px;text-align:center;line-height:18px;font-size:12px;color:#444">I</div>
<div class="abs" style="left:621px;top:858px;width:41px;height:18px;background:#ebebeb;border-radius:9px;text-align:center;line-height:18px;font-size:12px;color:#333">Local</div>
<div class="abs" style="left:739px;top:856px;width:24px;height:22px;background:#88cea4;border-radius:3px;text-align:center;line-height:22px;font-size:14px;color:#333">0</div>
<div class="cell r" style="left:763px;width:40px;top:858px;color:#333">1.5<br>千</div>
<svg class="abs" style="left:814px;top:855px" width="32" height="22" viewBox="0 0 32 22"><defs><linearGradient id="gb8" x1="0" y1="0" x2="0" y2="1"><stop offset="0" stop-color="#c4daf3"/><stop offset="1" stop-color="#eaf2fb"/></linearGradient><linearGradient id="go8" x1="0" y1="0" x2="0" y2="1"><stop offset="0" stop-color="#fdd7b0"/><stop offset="1" stop-color="#feefe1"/></linearGradient></defs><path d="M0.0 4.1 L2.0 6.5 L5.0 2.9 L8.0 6.5 L11.0 4.1 L15.0 0.5 L15 22 L0 22Z" fill="url(#gb8)"/><path d="M15.0 0.5 L18.0 2.9 L21.0 6.5 L24.0 4.1 L27.0 7.7 L30.0 2.9 L32.0 0.5 L32 22 L15 22Z" fill="url(#go8)"/><path d="M0 5.3 H32" stroke="#666" stroke-width="1" stroke-dasharray="2 3" fill="none"/><path d="M0.0 4.1 L2.0 6.5 L5.0 2.9 L8.0 6.5 L11.0 4.1 L15.0 0.5" stroke="#3f8ee0" stroke-width="1.3" fill="none"/><path d="M15.0 0.5 L18.0 2.9 L21.0 6.5 L24.0 4.1 L27.0 7.7 L30.0 2.9 L32.0 0.5" stroke="#f5921e" stroke-width="1.3" fill="none"/></svg>
<div class="cell r" style="left:858px;width:40px;top:858px;color:#0b8a4b">+1%</div>
<div class="abs" style="left:915px;top:864px;width:31px;height:6px;border:1px solid #e6e6e6"></div>
<div class="cell r" style="left:949px;width:40px;top:858px;color:#333">1.5<br>千</div>
<div class="cell r" style="left:1101px;width:60px;top:858px;color:#333">4.3千</div>
<div class="cell r" style="left:1163px;width:40px;top:858px;color:#333">4.3<br>千</div>
<div class="cell r" style="left:1205px;width:50px;top:858px;color:#aaa">N/A</div>
<div class="cell r" style="left:1258px;width:40px;top:858px;color:#333">1.01</div>
<div class="cell" style="left:1315px;top:858px;color:#1553aa">夜カフェ</div>
<div class="abs" style="left:1350px;top:94px;width:16px;height:777px;background:#ebedf0"></div>
</body></html>
